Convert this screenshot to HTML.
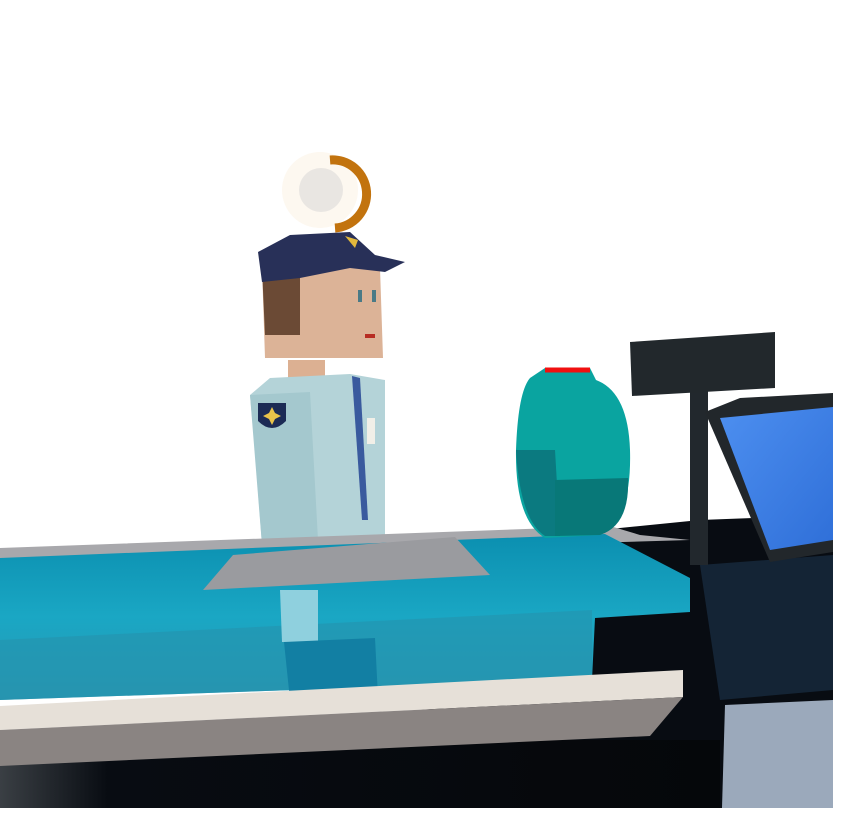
<!DOCTYPE html>
<html><head><style>html,body{margin:0;padding:0;background:#fff;width:866px;height:838px;overflow:hidden}</style></head>
<body>
<svg width="866" height="838" viewBox="0 0 866 838" xmlns="http://www.w3.org/2000/svg">
<defs>
<linearGradient id="blk" x1="0" x2="1" y1="0" y2="0">
<stop offset="0" stop-color="#3a3f44"/><stop offset="0.15" stop-color="#080c12"/><stop offset="1" stop-color="#05070a"/></linearGradient>
<linearGradient id="cy" x1="0" x2="0" y1="0" y2="1">
<stop offset="0" stop-color="#0b8fb0"/><stop offset="0.5" stop-color="#1aa7c4"/><stop offset="1" stop-color="#2a97b2"/></linearGradient>
<linearGradient id="scr" x1="0" x2="1" y1="0" y2="1"><stop offset="0" stop-color="#4d8ff0"/><stop offset="1" stop-color="#2f6fd8"/></linearGradient>
</defs>
<circle cx="320" cy="190" r="38" fill="#fdf8f0"/>
<path d="M330 160 A32 32 0 0 1 335 228" stroke="#c2730e" stroke-width="9" fill="none"/>
<circle cx="321" cy="190" r="22" fill="#e9e6e2"/>
<polygon points="288,360 325,360 325,380 288,380" fill="#dcb092"/>
<polygon points="250,395 270,378 350,374 385,380 385,545 262,545 255,450" fill="#b4d3d8"/>
<polygon points="250,395 310,392 318,540 262,545" fill="#a4c8ce"/>
<polygon points="352,376 360,378 368,520 362,520" fill="#3a5a9e"/>
<path d="M258 403 h28 v18 q-14 14 -28 0z" fill="#1c2b55"/>
<path d="M272 407 l3 6 6 3 -6 3 -3 6 -3 -6 -6 -3 6 -3z" fill="#e9c34a"/>
<rect x="367" y="418" width="8" height="26" fill="#f1efe8"/>
<polygon points="262,268 380,268 383,358 265,358" fill="#dcb397"/>
<polygon points="262,268 300,268 300,335 265,335" fill="#6b4a35"/>
<polygon points="258,252 290,235 350,232 375,255 405,262 385,272 350,268 300,278 262,282" fill="#283058"/>
<polygon points="345,236 358,240 355,248" fill="#e2b83c"/>
<rect x="358" y="290" width="4" height="12" fill="#4a7a86"/><rect x="372" y="290" width="4" height="12" fill="#4a7a86"/>
<rect x="365" y="334" width="10" height="4" fill="#b72d23"/>
<!-- dark base behind right side -->
<polygon points="600,530 700,520 833,515 833,808 0,808 0,760 590,690 595,600" fill="#080c12"/>
<rect x="0" y="740" width="720" height="68" fill="url(#blk)"/>
<polygon points="0,548 610,526 640,535 690,540 0,560" fill="#a8a8ac"/>
<polygon points="0,558 605,534 690,578 690,612 595,618 592,680 0,700" fill="url(#cy)"/>
<polygon points="0,640 592,610 592,680 0,700" fill="#2592ad" opacity="0.6"/>
<polygon points="280,590 318,590 318,642 282,642" fill="#8fd0de"/>
<polygon points="284,642 375,638 378,697 290,700" fill="#127fa3"/>
<polygon points="233,555 455,537 490,575 203,590" fill="#9a9b9f"/>
<polygon points="0,706 683,670 683,697 0,730" fill="#e6e0d8"/>
<polygon points="0,730 683,697 650,736 0,766" fill="#8a8482"/>
<path d="M530 378 L545 368 L590 368 L596 380 Q628 392 630 450 Q632 520 600 535 L545 538 Q515 520 516 450 Q518 392 530 378Z" fill="#0aa4a0"/>
<path d="M545 370 L590 370" stroke="#f01010" stroke-width="5"/>
<path d="M516 450 Q520 520 545 536 L560 536 L555 450Z" fill="#0b7a80"/>
<path d="M555 480 L628 478 Q630 525 600 535 L555 536Z" fill="#087878"/>
<polygon points="700,565 833,555 833,690 720,700" fill="#142435"/>
<polygon points="725,705 833,700 833,808 722,808" fill="#9ba9bb"/>
<rect x="690" y="385" width="18" height="180" fill="#22282d"/>
<polygon points="630,342 775,332 775,388 632,396" fill="#22282c"/>
<polygon points="705,412 740,398 833,393 833,552 770,562" fill="#22272b"/>
<polygon points="720,418 833,407 833,540 770,550" fill="url(#scr)"/>
<rect x="833" y="0" width="33" height="838" fill="#fff"/>
<rect x="0" y="808" width="866" height="30" fill="#fff"/>
</svg>
</body></html>
